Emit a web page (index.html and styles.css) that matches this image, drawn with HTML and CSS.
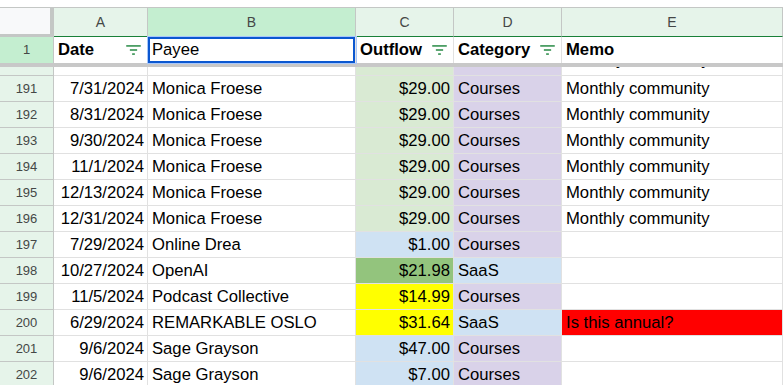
FILE: index.html
```html
<!DOCTYPE html>
<html lang="en">
	<head>
		<meta charset="utf-8">
		<title>Budget - Transactions</title>
		<link rel="stylesheet" href="styles.css">
	</head>
	<body>
		<div class="sheet">
			<div class="line colheads">
				<div class="corner"></div>
				<div class="colhead">A</div>
				<div class="colhead picked">B</div>
				<div class="colhead">C</div>
				<div class="colhead">D</div>
				<div class="colhead">E</div>
			</div>

			<div class="line toprow">
				<div class="rowhead picked">1</div>
				<div class="cell title">Date <svg class="filter" viewBox="0 0 16 11"><rect x="0" y="0" width="16" height="2"/><rect x="4" y="4.5" width="8" height="2"/><rect x="6.5" y="9" width="3" height="2"/></svg></div>
				<div class="cell active">Payee</div>
				<div class="cell title">Outflow <svg class="filter" viewBox="0 0 16 11"><rect x="0" y="0" width="16" height="2"/><rect x="4" y="4.5" width="8" height="2"/><rect x="6.5" y="9" width="3" height="2"/></svg></div>
				<div class="cell title">Category <svg class="filter" viewBox="0 0 16 11"><rect x="0" y="0" width="16" height="2"/><rect x="4" y="4.5" width="8" height="2"/><rect x="6.5" y="9" width="3" height="2"/></svg></div>
				<div class="cell title">Memo</div>
			</div>

			<div class="freeze"></div>

			<div class="rows">
				<div class="line first">
					<div class="rowhead">190</div>
					<div class="cell num">6/30/2024</div>
					<div class="cell">Monica Froese</div>
					<div class="cell num sage">$29.00</div>
					<div class="cell lilac">Courses</div>
					<div class="cell">Monthly community</div>
				</div>
				<div class="line">
					<div class="rowhead">191</div>
					<div class="cell num">7/31/2024</div>
					<div class="cell">Monica Froese</div>
					<div class="cell num sage">$29.00</div>
					<div class="cell lilac">Courses</div>
					<div class="cell">Monthly community</div>
				</div>
				<div class="line">
					<div class="rowhead">192</div>
					<div class="cell num">8/31/2024</div>
					<div class="cell">Monica Froese</div>
					<div class="cell num sage">$29.00</div>
					<div class="cell lilac">Courses</div>
					<div class="cell">Monthly community</div>
				</div>
				<div class="line">
					<div class="rowhead">193</div>
					<div class="cell num">9/30/2024</div>
					<div class="cell">Monica Froese</div>
					<div class="cell num sage">$29.00</div>
					<div class="cell lilac">Courses</div>
					<div class="cell">Monthly community</div>
				</div>
				<div class="line">
					<div class="rowhead">194</div>
					<div class="cell num">11/1/2024</div>
					<div class="cell">Monica Froese</div>
					<div class="cell num sage">$29.00</div>
					<div class="cell lilac">Courses</div>
					<div class="cell">Monthly community</div>
				</div>
				<div class="line">
					<div class="rowhead">195</div>
					<div class="cell num">12/13/2024</div>
					<div class="cell">Monica Froese</div>
					<div class="cell num sage">$29.00</div>
					<div class="cell lilac">Courses</div>
					<div class="cell">Monthly community</div>
				</div>
				<div class="line">
					<div class="rowhead">196</div>
					<div class="cell num">12/31/2024</div>
					<div class="cell">Monica Froese</div>
					<div class="cell num sage">$29.00</div>
					<div class="cell lilac">Courses</div>
					<div class="cell">Monthly community</div>
				</div>
				<div class="line">
					<div class="rowhead">197</div>
					<div class="cell num">7/29/2024</div>
					<div class="cell">Online Drea</div>
					<div class="cell num sky">$1.00</div>
					<div class="cell lilac">Courses</div>
					<div class="cell"></div>
				</div>
				<div class="line">
					<div class="rowhead">198</div>
					<div class="cell num">10/27/2024</div>
					<div class="cell">OpenAI</div>
					<div class="cell num moss">$21.98</div>
					<div class="cell sky">SaaS</div>
					<div class="cell"></div>
				</div>
				<div class="line">
					<div class="rowhead">199</div>
					<div class="cell num">11/5/2024</div>
					<div class="cell">Podcast Collective</div>
					<div class="cell num lemon">$14.99</div>
					<div class="cell lilac">Courses</div>
					<div class="cell"></div>
				</div>
				<div class="line">
					<div class="rowhead">200</div>
					<div class="cell num">6/29/2024</div>
					<div class="cell">REMARKABLE OSLO</div>
					<div class="cell num lemon">$31.64</div>
					<div class="cell sky">SaaS</div>
					<div class="cell alert">Is this annual?</div>
				</div>
				<div class="line">
					<div class="rowhead">201</div>
					<div class="cell num">9/6/2024</div>
					<div class="cell">Sage Grayson</div>
					<div class="cell num sky">$47.00</div>
					<div class="cell lilac">Courses</div>
					<div class="cell"></div>
				</div>
				<div class="line">
					<div class="rowhead">202</div>
					<div class="cell num">9/6/2024</div>
					<div class="cell">Sage Grayson</div>
					<div class="cell num sky">$7.00</div>
					<div class="cell lilac">Courses</div>
					<div class="cell"></div>
				</div>
			</div>
		</div>
	</body>
</html>
```

FILE: styles.css
```css
body {
	margin: 0;
	font-family: "Liberation Sans", Arial, sans-serif;
	color: #000;
	background-color: #FFF;
	overflow: hidden;
}
.sheet {
	padding-top: 7px;
	height: 378px;
	display: flex;
	flex-direction: column;
}

.line {
	display: grid;
	grid-template-columns: 54px 94px 208px 98px 108px 1fr;
	box-sizing: border-box;
	flex: none;
}
.line > div {
	box-sizing: border-box;
	white-space: nowrap;
	overflow: hidden;
}

/* column letters */
.colheads {
	height: 30px;
	border-top: 1px solid #c4c7c5;
}
.corner {
	background-color: #f8f9fa;
	border-right: 4px solid #c4c7c5;
	border-bottom: 3px solid #c4c7c5;
}
.colhead {
	background-color: #e6f4ea;
	border-right: 1px solid #c4c7c5;
	border-bottom: 1px solid #188038;
	color: #444746;
	font-size: 14px;
	text-align: center;
	line-height: 28px;
}
.colhead.picked {
	background-color: #c4eed0;
}

/* row numbers */
.rowhead {
	background-color: #e6f4ea;
	border-right: 1px solid #c4c7c5;
	border-bottom: 1px solid #c4c7c5;
	color: #444746;
	font-size: 13px;
	text-align: center;
	line-height: 25px;
}
.rowhead.picked {
	background-color: #c4eed0;
	border-bottom: none;
}

/* frozen header row */
.toprow {
	height: 26px;
}
.toprow .cell {
	border-bottom: none;
	line-height: 26px;
}
.title {
	font-weight: bold;
	display: flex;
	justify-content: space-between;
	align-items: center;
}
.filter {
	width: 15px;
	height: 10px;
	fill: #4e9f66;
	flex: none;
	margin-right: 2px;
}
.active {
	box-shadow: inset 0 0 0 2px #0b57d0, 0 0 0 1px #a8c7fa;
	position: relative;
	padding-left: 5px;
}

.freeze {
	height: 4px;
	background-color: #c8c8c8;
	flex: none;
}

/* scrolled body */
.rows {
	flex: 1;
	overflow: hidden;
}
.rows .line {
	height: 26px;
}
.rows .first {
	margin-top: -17px;
}
.first .cell {
	line-height: 19px;
}
.cell {
	border-right: 1px solid #e1e1e1;
	border-bottom: 1px solid #e1e1e1;
	font-size: 16.67px;
	line-height: 25px;
	padding: 0 4px;
}
.num {
	text-align: right;
	padding-right: 3px;
}

.sage {
	background-color: #d9ead3;
}
.sky {
	background-color: #cfe2f3;
}
.moss {
	background-color: #93c47d;
}
.lemon {
	background-color: #ffff00;
}
.lilac {
	background-color: #d9d2e9;
}
.alert {
	background-color: #ff0000;
}
```
